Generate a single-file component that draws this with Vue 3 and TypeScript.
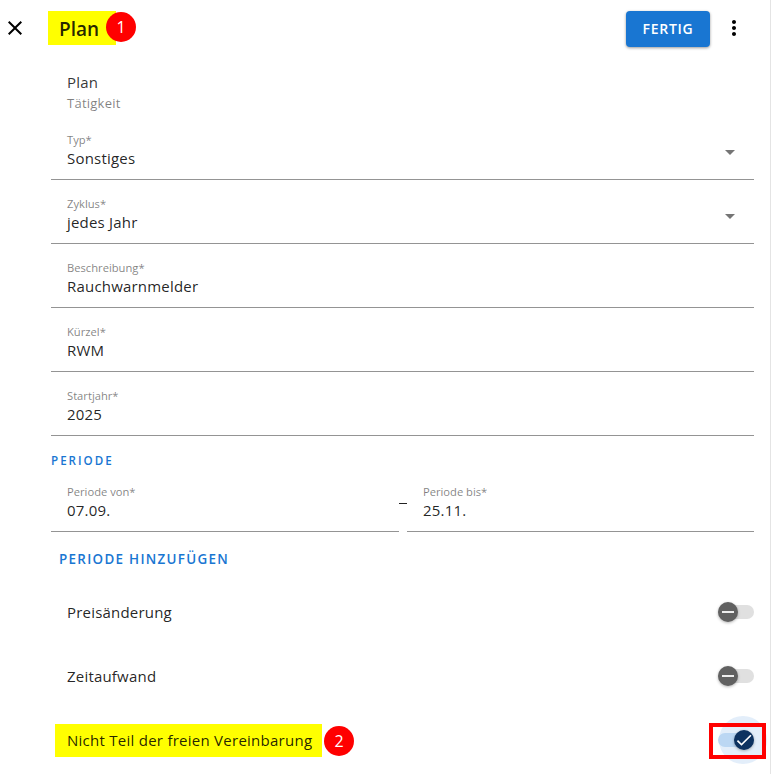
<script setup lang="ts">
const topFields = [
  { label: 'Typ*', value: 'Sonstiges', select: true },
  { label: 'Zyklus*', value: 'jedes Jahr', select: true },
  { label: 'Beschreibung*', value: 'Rauchwarnmelder', select: false },
  { label: 'Kürzel*', value: 'RWM', select: false },
  { label: 'Startjahr*', value: '2025', select: false },
]
</script>

<template>
  <div class="page">
    <header class="toolbar">
      <button class="icon-btn close" aria-label="Schließen">
        <svg width="24" height="24" viewBox="0 0 24 24"><path d="M19 6.41 17.59 5 12 10.59 6.41 5 5 6.41 10.59 12 5 17.59 6.41 19 12 13.41 17.59 19 19 17.59 13.41 12z" /></svg>
      </button>
      <div class="title-mark">
        <h1 class="title">Plan</h1>
        <span class="badge badge-title">1</span>
      </div>
      <div class="spacer"></div>
      <button class="done">FERTIG</button>
      <button class="icon-btn more" aria-label="Mehr">
        <svg width="24" height="24" viewBox="0 0 24 24"><path d="M12 8c1.1 0 2-.9 2-2s-.9-2-2-2-2 .9-2 2 .9 2 2 2zm0 2c-1.1 0-2 .9-2 2s.9 2 2 2 2-.9 2-2-.9-2-2-2zm0 6c-1.1 0-2 .9-2 2s.9 2 2 2 2-.9 2-2-.9-2-2-2z" /></svg>
      </button>
    </header>

    <main class="content">
      <div class="readonly">
        <div class="readonly-main">Plan</div>
        <div class="readonly-sub">Tätigkeit</div>
      </div>

      <div v-for="f in topFields" :key="f.label" class="field">
        <label class="field-label">{{ f.label }}</label>
        <div class="field-value">{{ f.value }}</div>
        <svg v-if="f.select" class="caret" width="24" height="24" viewBox="0 0 24 24"><path d="m7 10 5 5 5-5z" /></svg>
      </div>

      <div class="section">PERIODE</div>

      <div class="period">
        <div class="field from">
          <label class="field-label">Periode von*</label>
          <div class="field-value">07.09.</div>
        </div>
        <span class="dash"></span>
        <div class="field to">
          <label class="field-label">Periode bis*</label>
          <div class="field-value">25.11.</div>
        </div>
      </div>

      <button class="add">PERIODE HINZUFÜGEN</button>

      <div class="switch-row">
        <span class="switch-label">Preisänderung</span>
        <span class="switch off"><span class="track"></span><span class="thumb">
          <svg width="20" height="20" viewBox="0 0 20 20"><path d="M4 9h12v2H4z" /></svg>
        </span></span>
      </div>
      <div class="switch-row">
        <span class="switch-label">Zeitaufwand</span>
        <span class="switch off"><span class="track"></span><span class="thumb">
          <svg width="20" height="20" viewBox="0 0 20 20"><path d="M4 9h12v2H4z" /></svg>
        </span></span>
      </div>
      <div class="switch-row">
        <span class="label-mark">
          <span class="switch-label">Nicht Teil der freien Vereinbarung</span>
          <span class="badge badge-row">2</span>
        </span>
        <span class="switch on">
          <span class="halo"></span>
          <span class="track"></span>
          <span class="thumb">
            <svg width="20" height="20" viewBox="0 0 24 24"><path d="M9 16.17 4.83 12l-1.42 1.41L9 19 21 7l-1.41-1.41z" /></svg>
          </span>
          <span class="red-box"></span>
        </span>
      </div>
    </main>
  </div>
</template>

<style>
html, body { margin: 0; background: #fff; overflow: hidden; }
</style>

<style scoped>
.page {
  width: 771px;
  height: 774px;
  box-sizing: border-box;
  border-right: 1px solid #e4e4e4;
  background: #fff;
  color: rgba(0, 0, 0, 0.87);
  font-family: "Open Sans", "Noto Sans", sans-serif;
  overflow: hidden;
}
button { font-family: inherit; border: 0; background: none; padding: 0; }
.toolbar { height: 56px; display: flex; align-items: center; }
.icon-btn { width: 24px; height: 24px; color: #000; }
.icon-btn svg { display: block; fill: currentColor; }
.close { margin-left: 3px; }
.title-mark {
  position: relative;
  margin-left: 21px;
  width: 68px;
  height: 34px;
  background: #ff0;
  display: flex;
  align-items: center;
}
.title {
  margin: 1px 0 0 11px;
  font-size: 19px;
  line-height: 24px;
  font-weight: 600;
  color: rgba(0, 0, 0, 0.87);
}
.badge {
  width: 30px;
  height: 30px;
  border-radius: 50%;
  background: #f00;
  color: #fff;
  font-size: 16px;
  line-height: 30px;
  text-align: center;
  flex: none;
}
.badge-title { position: absolute; left: 58px; top: 1px; }
.spacer { flex: 1; }
.done {
  width: 84px;
  height: 36px;
  margin-top: 1px;
  border-radius: 4px;
  background: #1976d2;
  color: #fff;
  font-size: 14px;
  font-weight: 600;
  letter-spacing: 0.7px;
  box-shadow: 0 1px 3px rgba(0, 0, 0, 0.4);
}
.more { margin: 0 24px 0 12px; }
.content { margin: 0 16px 0 51px; }
.readonly { height: 60px; box-sizing: border-box; padding: 15px 16px 0; }
.readonly-main { font-size: 15px; line-height: 22px; letter-spacing: 0.2px; color: rgba(0, 0, 0, 0.8); }
.readonly-sub { font-size: 13px; line-height: 20px; letter-spacing: 0.25px; color: rgba(0, 0, 0, 0.5); }
.field {
  position: relative;
  height: 64px;
  box-sizing: border-box;
  padding: 17px 16px 0;
  border-bottom: 1px solid #949494;
}
.field-label { display: block; font-size: 11.2px; line-height: 13px; color: rgba(0, 0, 0, 0.5); }
.field-value { font-size: 15px; line-height: 24px; letter-spacing: 0.2px; color: rgba(0, 0, 0, 0.87); }
.caret { position: absolute; right: 12px; top: 24px; fill: #757575; }
.section {
  height: 17px;
  margin-top: 15px;
  font-size: 11.6px;
  line-height: 20px;
  font-weight: 600;
  letter-spacing: 2px;
  color: #1976d2;
}
.period { display: flex; align-items: flex-start; }
.from { flex: 348 1 0; }
.to { flex: 347 1 0; }
.dash { flex: none; width: 8px; height: 1px; margin-top: 35px; background: #222; }
.add {
  display: block;
  height: 24px;
  margin: 15px 0 9px 8px;
  font-size: 13.4px;
  line-height: 24px;
  font-weight: 600;
  letter-spacing: 1.3px;
  color: #1976d2;
}
.switch-row {
  height: 64px;
  display: flex;
  align-items: center;
  justify-content: space-between;
}
.switch-label { font-size: 15px; line-height: 24px; letter-spacing: 0.2px; padding-left: 16px; color: rgba(0, 0, 0, 0.87); }
.label-mark {
  position: relative;
  margin-left: 4px;
  width: 267px;
  height: 33px;
  background: #ff0;
  display: flex;
  align-items: center;
  box-sizing: border-box;
  padding-left: 12px;
}
.label-mark .switch-label { padding-left: 0; white-space: nowrap; letter-spacing: 0.26px; }
.badge-row { position: absolute; left: 269px; top: 2px; }
.switch { position: relative; width: 36px; height: 20px; flex: none; }
.track {
  position: absolute;
  left: 0;
  right: 0;
  top: 3px;
  height: 14px;
  border-radius: 7px;
  background: #e0e0e0;
}
.thumb {
  position: absolute;
  top: 0;
  left: 0;
  width: 20px;
  height: 20px;
  border-radius: 50%;
  background: #616161;
  box-shadow: 0 1px 3px rgba(0, 0, 0, 0.3);
}
.thumb svg { display: block; fill: #eee; }
.on .track { background: #bbd7f3; }
.on .thumb { left: 16px; background: #0d3260; }
.on .thumb svg { fill: #fff; }
.halo {
  position: absolute;
  left: 1px;
  top: -14px;
  width: 48px;
  height: 48px;
  border-radius: 50%;
  background: rgba(25, 118, 210, 0.12);
}
.red-box {
  position: absolute;
  left: -9px;
  top: -7px;
  width: 57px;
  height: 36px;
  box-sizing: border-box;
  border: 4px solid #f00;
}
</style>
